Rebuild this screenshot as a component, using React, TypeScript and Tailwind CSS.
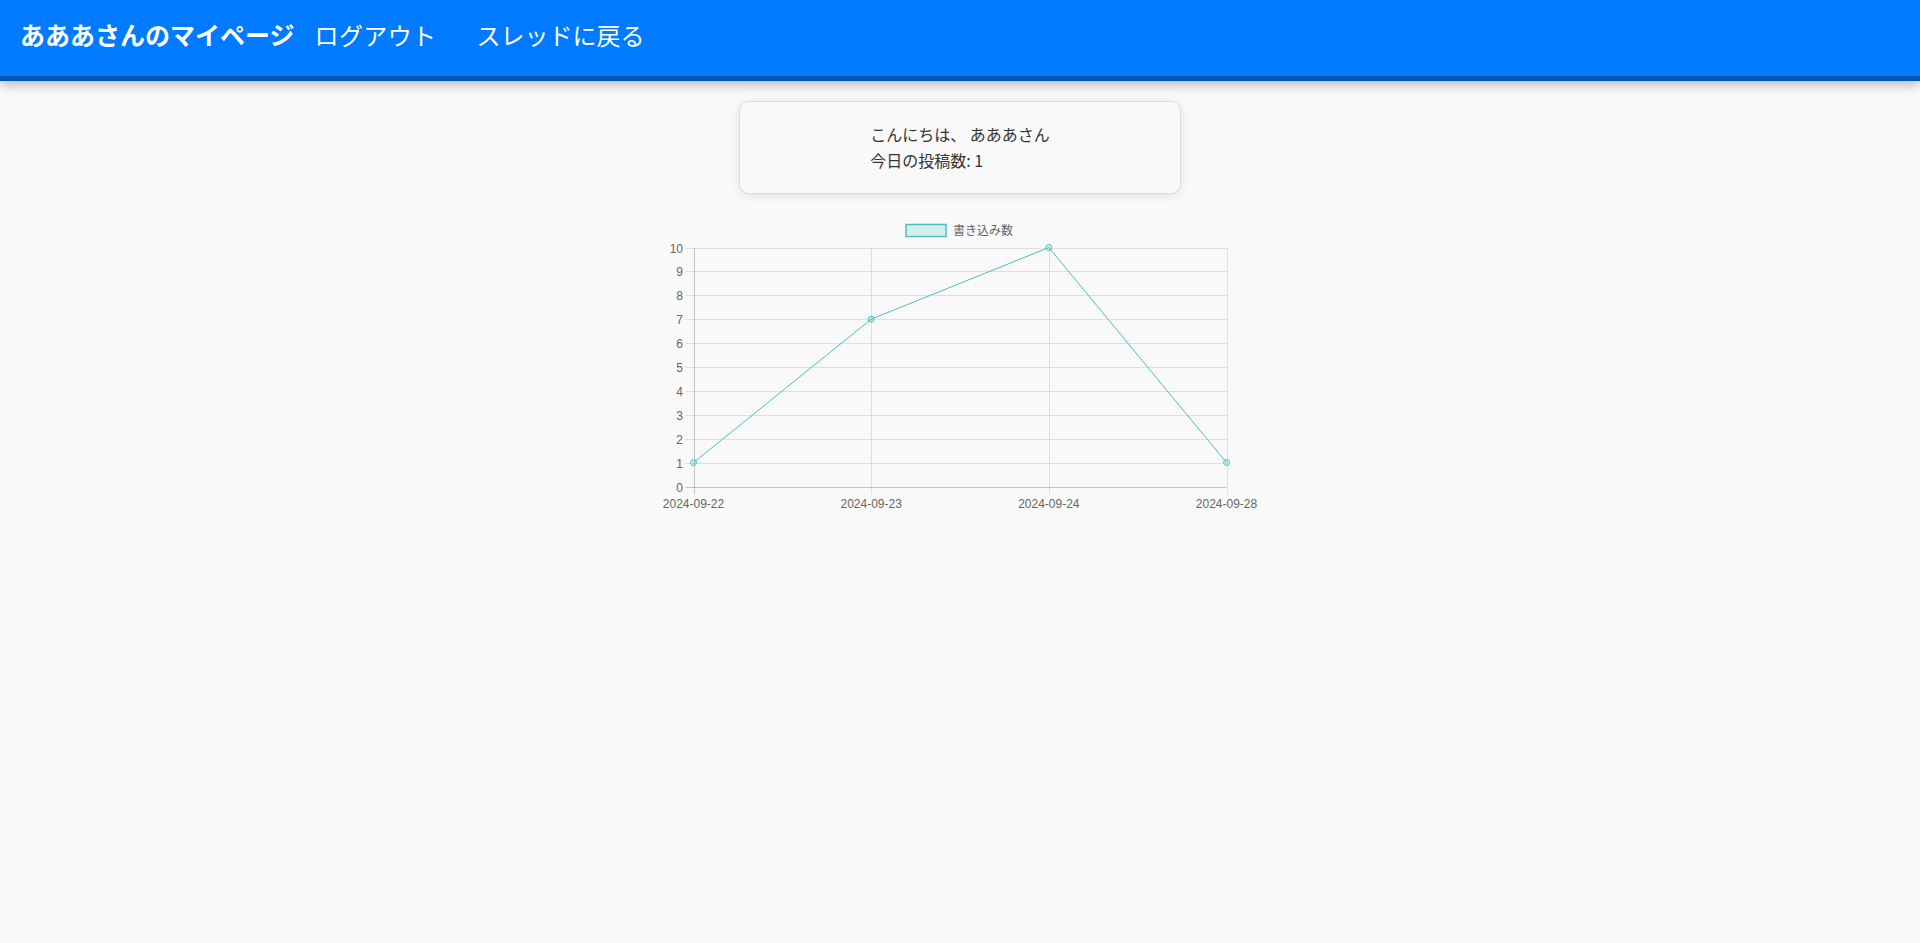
const counts = [
  { date: "2024-09-22", value: 1 },
  { date: "2024-09-23", value: 7 },
  { date: "2024-09-24", value: 10 },
  { date: "2024-09-28", value: 1 },
];

const LEFT = 43.5;
const RIGHT = 576.5;
const TOP = 32.5;
const BOTTOM = 271.5;
const stepY = (BOTTOM - TOP) / 10;
const stepX = (RIGHT - LEFT) / (counts.length - 1);
const teal = "rgb(75,192,192)";

const yOf = (v: number) => BOTTOM - v * stepY;
const xOf = (i: number) => LEFT + i * stepX;

const PostChart = () => {
  const ticks = Array.from({ length: 11 }, (_, i) => i);
  const points = counts.map((c, i) => `${xOf(i)},${yOf(c.value)}`).join(" ");

  return (
    <svg width={620} height={300} className="mx-auto block" style={{ fontFamily: "'Liberation Sans', Arial, sans-serif" }}>
      {/* legend */}
      <rect x={256} y={9.5} width={40} height={12} fill="rgba(75,192,192,0.2)" stroke={teal} strokeWidth={1.5} />
      <text x={303} y={20} fontSize={12} fill="#666" style={{ fontFamily: "'Noto Sans CJK JP', sans-serif" }}>
        書き込み数
      </text>

      {/* horizontal grid */}
      {ticks.map((t) => (
        <g key={t}>
          <line
            x1={LEFT - 8}
            x2={RIGHT}
            y1={Math.round(yOf(t)) + 0.5}
            y2={Math.round(yOf(t)) + 0.5}
            stroke={t === 0 ? "rgba(0,0,0,0.22)" : "rgba(0,0,0,0.1)"}
            strokeWidth={1}
          />
          <text x={33} y={Math.round(yOf(t)) + 4.5} fontSize={12} fill="#666" textAnchor="end">
            {t}
          </text>
        </g>
      ))}

      {/* vertical grid */}
      {counts.map((c, i) => (
        <g key={c.date}>
          <line
            x1={Math.round(xOf(i)) + 0.5}
            x2={Math.round(xOf(i)) + 0.5}
            y1={TOP}
            y2={BOTTOM + 8}
            stroke={i === 0 ? "rgba(0,0,0,0.22)" : "rgba(0,0,0,0.1)"}
            strokeWidth={1}
          />
          <text x={xOf(i)} y={293} fontSize={12} fill="#666" textAnchor="middle">
            {c.date}
          </text>
        </g>
      ))}

      <polyline points={points} fill="none" stroke={teal} strokeWidth={1} />
      {counts.map((c, i) => (
        <circle key={c.date} cx={xOf(i)} cy={yOf(c.value)} r={3} fill="rgba(75,192,192,0.2)" stroke={teal} strokeWidth={1} />
      ))}
    </svg>
  );
};

const App = () => {
  return (
    <div
      className="min-h-[943px] bg-[#f9f9f9]"
      style={{ fontFamily: "'Noto Sans CJK JP', 'Noto Sans', sans-serif" }}
    >
      <header className="h-[81px] bg-[#007bff] border-b-[5px] border-[#0056b3] shadow-[0_4px_10px_rgba(0,0,0,0.25)] flex items-center px-5 pb-[6px] text-white text-2xl">
        <h1 className="font-bold text-[25px]">あああさんのマイページ</h1>
        <a className="mx-5 cursor-pointer tracking-[0.4px]">ログアウト</a>
        <a className="mx-5 cursor-pointer">スレッドに戻る</a>
      </header>

      <main className="pt-5">
        <div className="w-[442px] mx-auto rounded-[10px] border border-[#dddddd] bg-[#f9f9f9] shadow-[0_2px_10px_rgba(0,0,0,0.1)] pt-[19px] pb-5 flex justify-center text-[#333] text-base leading-[26px]">
          <div>
            <p>こんにちは、 あああさん</p>
            <p>今日の投稿数: 1</p>
          </div>
        </div>

        <div className="mt-[21px]">
          <PostChart />
        </div>
      </main>
    </div>
  );
};

export default App;
